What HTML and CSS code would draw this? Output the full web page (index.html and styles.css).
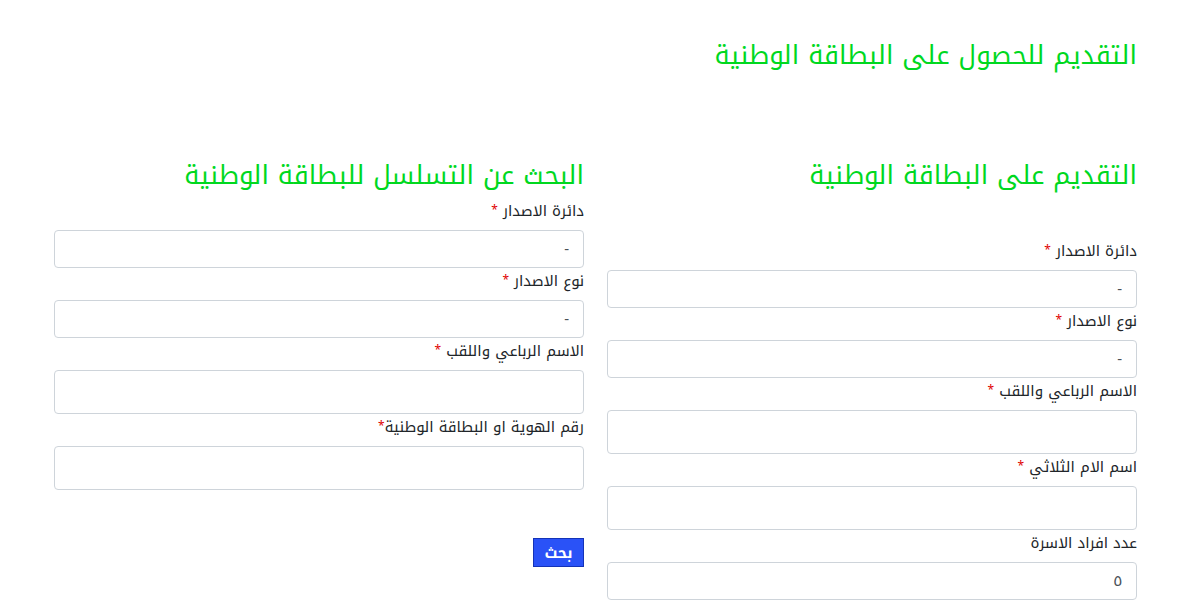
FILE: index.html
```html
<!DOCTYPE html>
<html lang="ar" dir="rtl">
<head>
<meta charset="utf-8">
<title>التقديم للحصول على البطاقة الوطنية</title>
<link rel="stylesheet" href="styles.css">
</head>
<body>
<div class="container">
  <h1 class="page-title">التقديم للحصول على البطاقة الوطنية</h1>
  <div class="columns">
    <section class="col">
      <h2 class="col-title">التقديم على البطاقة الوطنية</h2>
      <div class="spacer"></div>
      <div class="group">
        <label class="lbl">دائرة الاصدار <span class="req">*</span></label>
        <select class="field select"><option>-</option></select>
      </div>
      <div class="group">
        <label class="lbl">نوع الاصدار <span class="req">*</span></label>
        <select class="field select"><option>-</option></select>
      </div>
      <div class="group">
        <label class="lbl">الاسم الرباعي واللقب <span class="req">*</span></label>
        <input class="field text" type="text">
      </div>
      <div class="group">
        <label class="lbl">اسم الام الثلاثي <span class="req">*</span></label>
        <input class="field text" type="text">
      </div>
      <div class="group">
        <label class="lbl">عدد افراد الاسرة</label>
        <input class="field select" type="text" value="٥">
      </div>
    </section>
    <section class="col">
      <h2 class="col-title">البحث عن التسلسل للبطاقة الوطنية</h2>
      <div class="group">
        <label class="lbl">دائرة الاصدار <span class="req">*</span></label>
        <select class="field select"><option>-</option></select>
      </div>
      <div class="group">
        <label class="lbl">نوع الاصدار <span class="req">*</span></label>
        <select class="field select"><option>-</option></select>
      </div>
      <div class="group">
        <label class="lbl">الاسم الرباعي واللقب <span class="req">*</span></label>
        <input class="field text" type="text">
      </div>
      <div class="group">
        <label class="lbl">رقم الهوية او البطاقة الوطنية<span class="req">*</span></label>
        <input class="field text" type="text">
      </div>
      <div class="actions">
        <button class="btn" type="button">بحث</button>
      </div>
    </section>
  </div>
</div>
</body>
</html>
```
FILE: styles.css
```css
* { box-sizing: border-box; }
html, body {
  margin: 0;
  padding: 0;
  background: #fff;
}
body {
  font-family: "Noto Kufi Arabic", "Noto Sans Arabic", "DejaVu Sans", "Noto Sans", sans-serif;
  color: #212529;
  overflow: hidden;
}
.container {
  width: 1083px;
  margin: 0 63px 0 54px;
}
.page-title {
  margin: 0;
  padding-top: 36px;
  height: 150px;
  font-size: 26px;
  line-height: 40px;
  font-weight: 400;
  color: #00d81f;
}
.columns {
  display: grid;
  grid-template-columns: 530px 530px;
  column-gap: 23px;
}
.col-title {
  margin: 0;
  padding-top: 6px;
  height: 50px;
  font-size: 26px;
  line-height: 40px;
  font-weight: 400;
  color: #00d81f;
  white-space: nowrap;
}
.spacer { height: 40px; }
.group {
  display: flex;
  flex-direction: column;
  margin-bottom: 2px;
}
.lbl {
  font-size: 15px;
  line-height: 22px;
  height: 22px;
  margin-bottom: 8px;
  color: #212529;
  white-space: nowrap;
}
.req {
  color: #e00000;
  font-size: 12px;
  line-height: 1;
  vertical-align: 2px;
}
.field {
  display: block;
  width: 100%;
  border: 1px solid #ced4da;
  border-radius: 4px;
  background: #fff;
  font-family: inherit;
  font-size: 15px;
  color: #495057;
  padding: 0 14px;
  margin: 0;
  outline: none;
}
.select {
  height: 38px;
  appearance: none;
  -webkit-appearance: none;
}
.text {
  height: 44px;
}
.actions {
  padding-top: 45px;
}
.btn {
  width: 51px;
  height: 29px;
  background: #2a52f7;
  border: 1px solid #1433b8;
  color: #fff;
  font-family: inherit;
  font-size: 15px;
  font-weight: 700;
  padding: 0;
  cursor: pointer;
}
```
